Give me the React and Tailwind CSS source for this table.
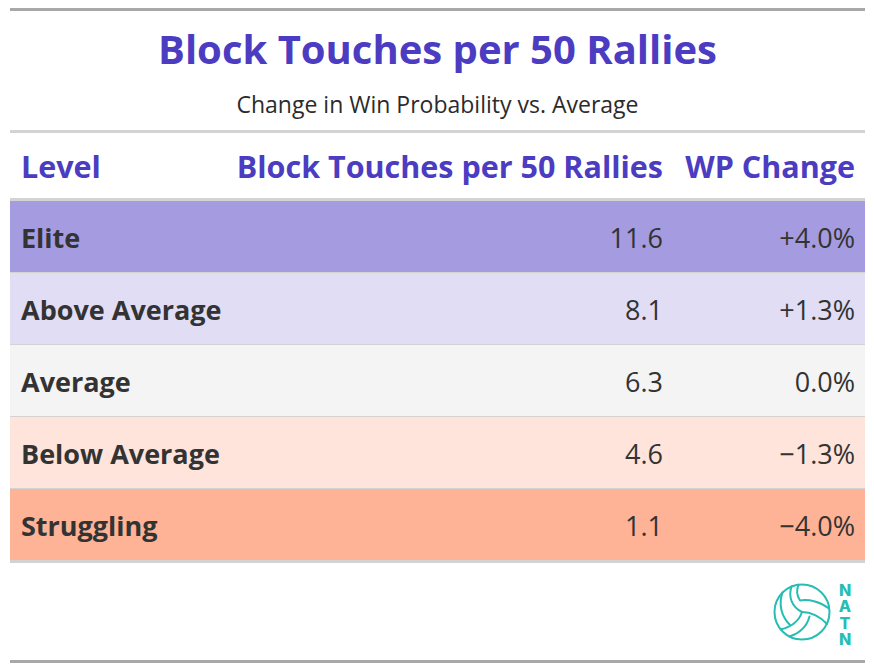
import React from "react";

const rows = [
  { level: "Elite", v: "11.6", wp: "+4.0%", bg: "bg-[#a59be0]" },
  { level: "Above Average", v: "8.1", wp: "+1.3%", bg: "bg-[#e1ddf5]" },
  { level: "Average", v: "6.3", wp: "0.0%", bg: "bg-[#f4f4f4]" },
  { level: "Below Average", v: "4.6", wp: "\u22121.3%", bg: "bg-[#fee4db]" },
  { level: "Struggling", v: "1.1", wp: "\u22124.0%", bg: "bg-[#feb296]" },
];

function Ball() {
  return (
    <svg width="66" height="66" viewBox="0 0 66 66" fill="none" stroke="#27bdb3" strokeWidth="2" strokeLinecap="round" strokeLinejoin="round">
      <circle cx="33" cy="33" r="27.5" />
      <path d="M22.5 7.5 C 19 18, 23 28, 33 33" />
      <path d="M29.5 5.6 C 27 12, 28 17, 31 21.5 C 40 20, 52 23, 60 29.5" />
      <path d="M33 33 C 42 33, 52 38, 58 45" />
      <path d="M33 33 C 30 42, 22 48, 11.5 50.5" />
      <path d="M40.5 37.5 C 38 47, 31 54, 20.5 57.5" />
      <path d="M13.5 13.5 C 9.5 25, 12 37, 21 46" />
    </svg>
  );
}

export default function App() {
  return (
    <div className="w-[874px] h-[672px] bg-white pt-2 px-[10px] font-['Open_Sans','Noto_Sans',sans-serif] text-[#333333]">
      <div className="w-[855px] border-t-[3px] border-[#a8a8a8]">
        <div className="h-[122px] flex flex-col items-center border-b-[3px] border-[#d3d3d3]">
          <div className="mt-[18px] text-[40px] font-bold text-[#4b3cc2] leading-none">
            Block Touches per 50 Rallies
          </div>
          <div className="mt-[24px] text-[23px] leading-none text-[#2b2b2b]">Change in Win Probability vs. Average</div>
        </div>
        <div className="grid grid-cols-[1fr_440px_192px]">
          <div className="h-[68px] pt-[2px] px-[11px] text-[30.5px] font-bold text-[#4b3cc2] border-b-[3px] border-[#d3d3d3] leading-none flex items-center whitespace-nowrap">Level</div>
          <div className="h-[68px] pt-[2px] px-[10px] text-[30.5px] font-bold text-[#4b3cc2] border-b-[3px] border-[#d3d3d3] leading-none flex items-center justify-end whitespace-nowrap">Block Touches per 50 Rallies</div>
          <div className="h-[68px] pt-[2px] px-[10px] text-[30.5px] font-bold text-[#4b3cc2] border-b-[3px] border-[#d3d3d3] leading-none flex items-center justify-end whitespace-nowrap">WP Change</div>
          {rows.map((r, i) => {
            const cell = i > 0 ? "h-[72px] border-t border-[#d3d3d3]" : "h-[71px]";
            return (
              <React.Fragment key={r.level}>
                <div className={`${cell} ${r.bg} pt-[2px] px-[11px] flex items-center text-[27px] leading-none font-bold`}>{r.level}</div>
                <div className={`${cell} ${r.bg} pt-[2px] px-[10px] flex items-center justify-end text-[27px] leading-none`}>{r.v}</div>
                <div className={`${cell} ${r.bg} pt-[2px] px-[10px] flex items-center justify-end text-[27px] leading-none`}>{r.wp}</div>
              </React.Fragment>
            );
          })}
        </div>
        <div className="h-[100px] border-t-[3px] border-[#d3d3d3] flex items-center justify-end pr-[12px]">
          <Ball />
          <div className="[writing-mode:vertical-rl] [text-orientation:upright] text-[16px] leading-none font-extrabold text-[#27bdb3] font-['Inter',sans-serif] tracking-[-3.6px] ml-[2px] mt-[3px]">
            NATN
          </div>
        </div>
        <div className="border-t-[3px] border-[#a8a8a8]"></div>
      </div>
    </div>
  );
}
